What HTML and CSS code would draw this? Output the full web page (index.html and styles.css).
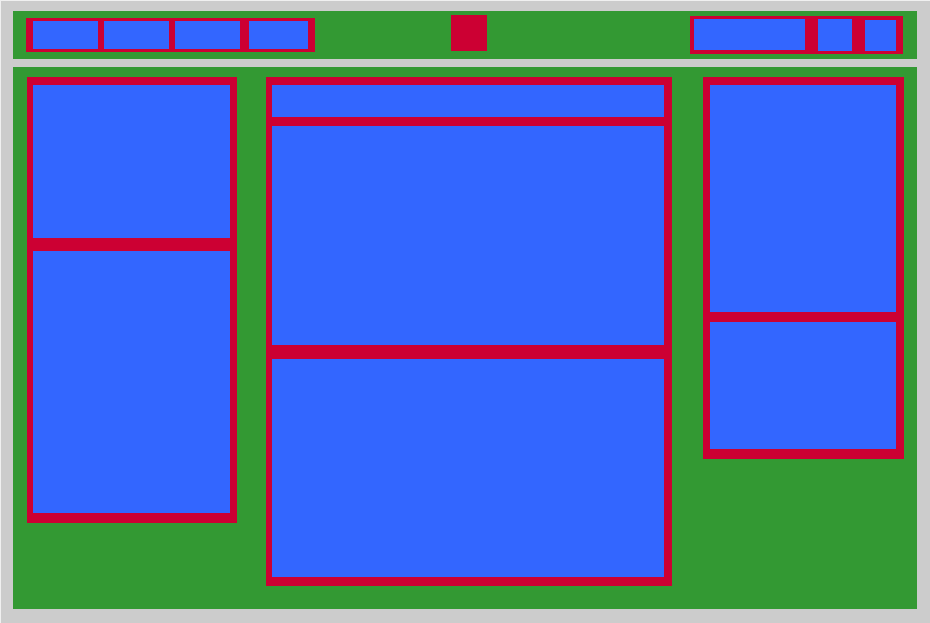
FILE: index.html
```html
<!DOCTYPE html>
<html lang="en">
<head>
  <meta charset="utf-8">
  <meta name="viewport" content="width=device-width, initial-scale=1">
  <title>Layout wireframe</title>
  <link rel="stylesheet" href="styles.css">
</head>
<body>
  <header class="topbar">
    <div class="nav">
      <div class="block nav-item"></div>
      <div class="block nav-item"></div>
      <div class="block nav-item"></div>
      <div class="block nav-item nav-item-last"></div>
    </div>
    <div class="logo"></div>
    <div class="tools">
      <div class="block tool-search"></div>
      <div class="block tool-avatar"></div>
      <div class="block tool-action"></div>
    </div>
  </header>
  <main class="content">
    <section class="column column-left">
      <div class="block profile"></div>
      <div class="block trends"></div>
    </section>
    <section class="column column-center">
      <div class="block composer"></div>
      <div class="block post-first"></div>
      <div class="block post-second"></div>
    </section>
    <aside class="column column-right">
      <div class="block suggestions"></div>
      <div class="block links"></div>
    </aside>
  </main>
</body>
</html>
```
FILE: styles.css
```css
:root {
  --frame: #cccccc;
  --edge: #f0f0f0;
  --area: #339933;
  --group: #cc0033;
  --block: #3366ff;
}

* {
  box-sizing: border-box;
}

body {
  display: flex;
  flex-direction: column;
  gap: 8px;
  min-height: 100vh;
  margin: 0;
  padding: 10px 13px 14px 12px;
  border-top: 1px solid var(--edge);
  border-left: 1px solid var(--edge);
  background: var(--frame);
}

.block {
  background: var(--block);
}

/* Top bar */
.topbar {
  display: grid;
  grid-template-columns: 425fr 36px 416fr;
  align-items: center;
  min-height: 48px;
  padding: 4px 14px 4px 13px;
  background: var(--area);
}

.nav {
  display: flex;
  justify-self: start;
  gap: 6px;
  padding: 3px 7px;
  background: var(--group);
}

.nav-item {
  width: 65px;
  height: 28px;
}

.nav-item-last {
  width: 59px;
  margin-left: 3px;
}

.logo {
  align-self: start;
  height: 36px;
  margin-bottom: 4px;
  background: var(--group);
}

.tools {
  display: flex;
  justify-self: end;
  gap: 13px;
  padding: 3px 7px 3px 4px;
  background: var(--group);
}

.tool-search {
  width: 111px;
  height: 31px;
}

.tool-avatar {
  width: 34px;
  height: 32px;
}

.tool-action {
  align-self: flex-end;
  width: 31px;
  height: 31px;
}

/* Three columns */
.content {
  display: grid;
  flex: 1;
  grid-template-columns: 239fr 437fr 201fr;
  align-items: start;
  padding: 10px 13px 23px 14px;
  background: var(--area);
}

.column {
  display: flex;
  flex-direction: column;
  background: var(--group);
}

.column-left {
  gap: 13px;
  margin-right: 29px;
  padding: 8px 7px 10px 6px;
}

.column-center {
  margin-right: 31px;
  padding: 8px 8px 9px 6px;
}

.column-right {
  gap: 10px;
  padding: 8px 8px 10px 7px;
}

.profile {
  height: 153px;
}

.trends {
  height: 262px;
}

.composer {
  height: 32px;
  margin-bottom: 9px;
}

.post-first {
  height: 219px;
  margin-bottom: 14px;
}

.post-second {
  height: 218px;
}

.suggestions {
  height: 227px;
}

.links {
  height: 127px;
}
```
